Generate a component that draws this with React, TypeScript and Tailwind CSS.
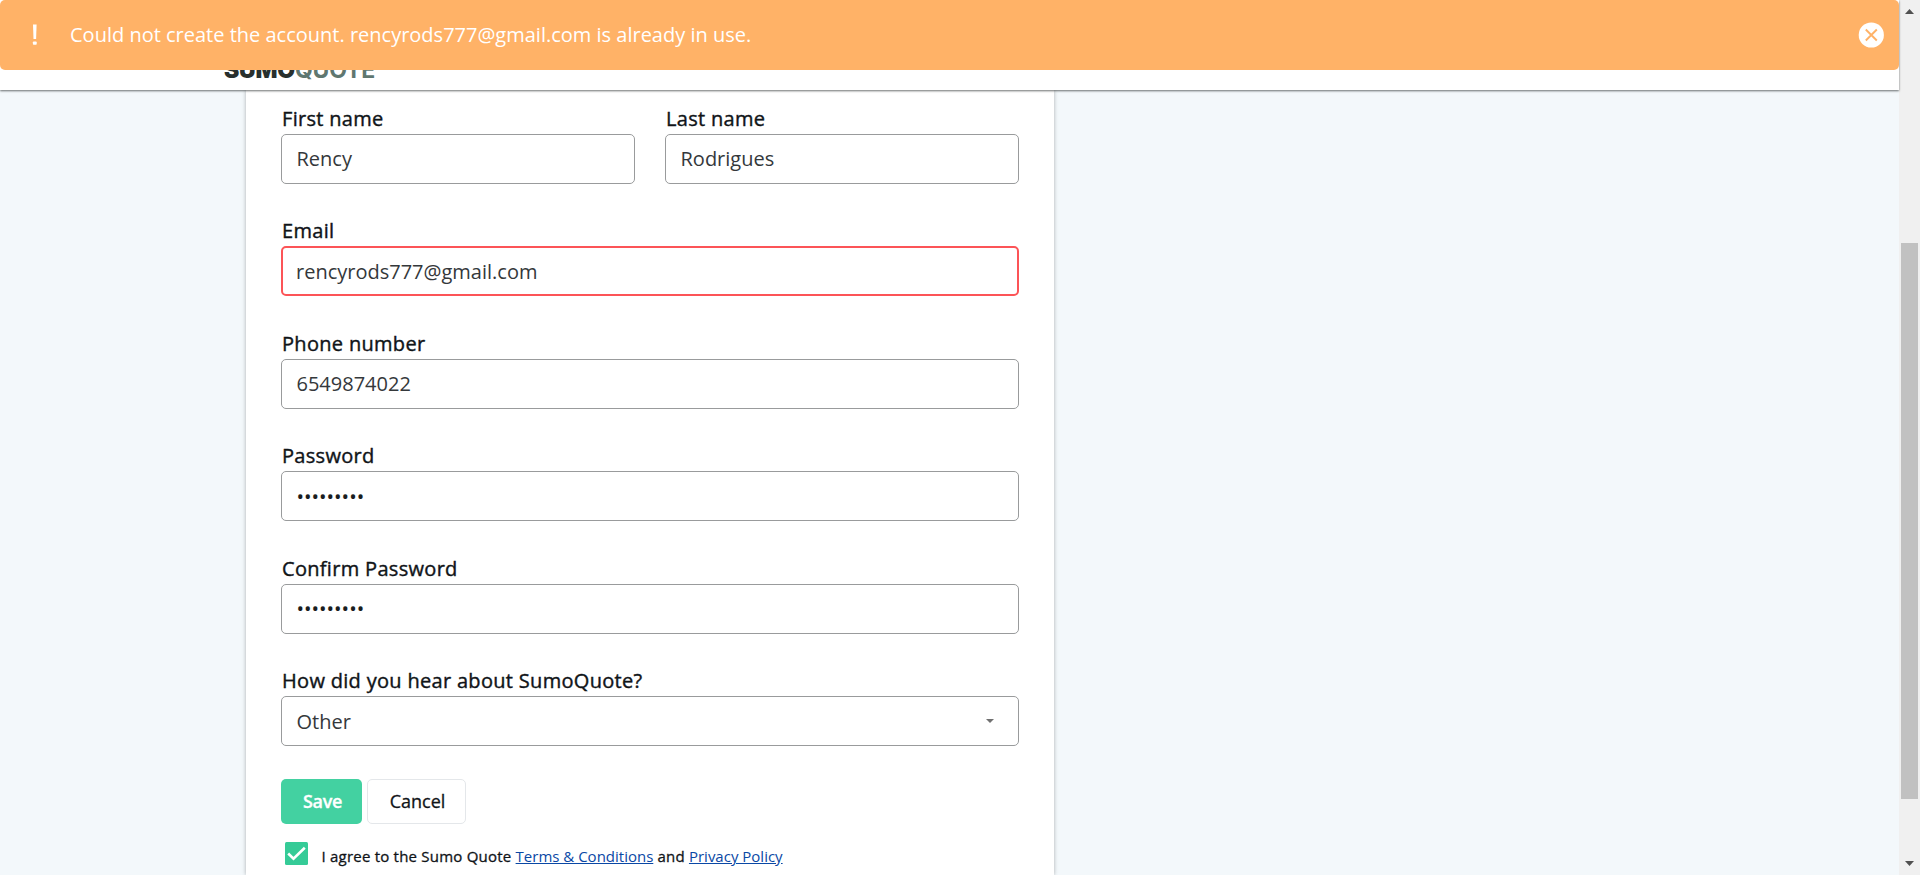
import type { ReactNode } from "react";

function Field({ label, children, error = false }: { label: string; children: ReactNode; error?: boolean }) {
  return (
    <div className="flex h-[112.45px] w-full flex-col">
      <label className="h-[28px] pl-px text-[20px] leading-[25px] tracking-[0.31px] text-[#101418] [-webkit-text-stroke:0.4px_#101418]">
        {label}
      </label>
      <div
        className={
          error
            ? "flex h-[50px] w-full items-center rounded-[5px] border-2 border-[#fc5457] px-[13px] text-[20px] leading-[27px] text-[#34383b]"
            : "flex h-[50px] w-full items-center rounded-[5px] border border-[#999b9c] px-[14.5px] text-[20px] leading-[27px] text-[#34383b]"
        }
      >
        {children}
      </div>
    </div>
  );
}

function Banner() {
  return (
    <div className="flex h-[70px] w-[1899px] items-center rounded-[5px] bg-[#ffb267] text-white">
      <svg className="ml-[32px] shrink-0" width="6" height="22" viewBox="0 0 6 22">
        <path d="M1 0.5h3.6l-0.5 14.6H1.5z" fill="white" />
        <rect x="0.9" y="17.4" width="3.8" height="3.4" rx="0.8" fill="white" />
      </svg>
      <span className="ml-[32px] pb-[2px] text-[20px] leading-[27px]">
        Could not create the account. rencyrods777@gmail.com is already in use.
      </span>
      <svg className="ml-auto mr-[15px]" width="26" height="26" viewBox="0 0 26 26">
        <circle cx="13.3" cy="13" r="12.6" fill="white" />
        <path d="M7.8 7.5l11 11M18.8 7.5l-11 11" stroke="#ffb267" strokeWidth="1.9" />
      </svg>
    </div>
  );
}

function Scrollbar() {
  return (
    <div className="flex h-full w-[21px] shrink-0 flex-col items-center bg-[#f0f0f0]">
      <svg width="21" height="243" viewBox="0 0 21 243">
        <path d="M6 14h9l-4.5-5z" fill="#505050" />
      </svg>
      <div className="h-[556px] w-[17px] bg-[#c1c1c1]" />
      <svg className="mt-auto" width="21" height="20" viewBox="0 0 21 20">
        <path d="M6 6h9l-4.5 5z" fill="#505050" />
      </svg>
    </div>
  );
}

export default function App() {
  return (
    <div className="relative flex h-[875px] w-[1920px] overflow-hidden bg-[#f3f8fb] font-['Open_Sans','Noto_Sans',sans-serif]">
      <div className="flex h-full w-[1899px] flex-col">
        <header className="relative z-10 flex h-[90px] shrink-0 items-end bg-white pl-[224px] shadow-[0_1px_2px_rgba(30,35,35,0.65)]">
          <div className="mb-[6px] flex font-['Inter',sans-serif] text-[23px] leading-[28px]">
            <span className="font-black tracking-[-0.2px] text-[#28302e]">SUMO</span>
            <span className="font-bold tracking-[-0.2px] text-[#5f7770]">QUOTE</span>
          </div>
        </header>
        <main className="ml-[246px] flex h-[785px] w-[808px] shrink-0 flex-col bg-white px-[35px] pt-[16px] shadow-[0_0_4px_rgba(0,0,0,0.3)]">
          <div className="flex gap-[30px]">
            <Field label="First name"><span className="pb-[2px]">Rency</span></Field>
            <Field label="Last name"><span className="pb-[2px]">Rodrigues</span></Field>
          </div>
          <Field label="Email" error>rencyrods777@gmail.com</Field>
          <Field label="Phone number">6549874022</Field>
          <Field label="Password"><span className="text-[#1a1d20]">•••••••••</span></Field>
          <Field label="Confirm Password"><span className="text-[#1a1d20]">•••••••••</span></Field>
          <Field label="How did you hear about SumoQuote?">
            <span>Other</span>
            <svg className="ml-auto mr-[10px]" width="8" height="4" viewBox="0 0 8 4">
              <path d="M0 0h8L4 4z" fill="#707070" />
            </svg>
          </Field>
          <div className="-mt-[2px] flex h-[45px] gap-[5px] text-[18px] leading-[24px]">
            <button className="w-[81px] rounded-[5px] bg-[#43d1a1] pl-[2px] font-semibold tracking-[-0.3px] text-white [-webkit-text-stroke:0.3px_white]">
              Save
            </button>
            <button className="w-[99px] rounded-[5px] border border-[#e4e7ea] pl-[2px] text-[#101418] [-webkit-text-stroke:0.3px_#101418]">
              Cancel
            </button>
          </div>
          <div className="mt-[18px] flex pl-[4px]">
            <svg width="23" height="23" viewBox="0 0 23 23">
              <rect width="23" height="23" rx="1.5" fill="#35cb97" />
              <path d="M3.2 11.5l5.3 5.2L19.8 5.8" fill="none" stroke="white" strokeWidth="2.6" />
            </svg>
            <p className="ml-[13.5px] mt-[2px] whitespace-pre text-[15px] leading-[24px] tracking-[0.22px] text-[#101418] [-webkit-text-stroke:0.3px_#101418]">
              I agree to the Sumo Quote{" "}
              <a className="tracking-normal text-[#0a48a5] underline [-webkit-text-stroke:0]">Terms & Conditions</a> and{" "}
              <a className="tracking-normal text-[#0a48a5] underline [-webkit-text-stroke:0]">Privacy Policy</a>
            </p>
          </div>
        </main>
      </div>
      <Scrollbar />
      <div className="absolute left-0 top-0 z-20">
        <Banner />
      </div>
    </div>
  );
}
